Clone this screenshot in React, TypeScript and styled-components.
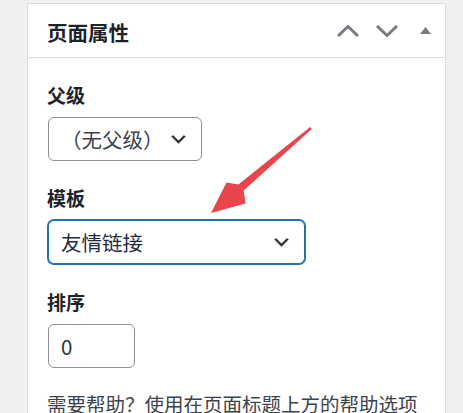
import React from 'react';
import styled, { createGlobalStyle } from 'styled-components';

const GlobalStyle = createGlobalStyle`
  html, body {
    margin: 0;
    padding: 0;
    background: #f0f0f1;
    overflow: hidden;
  }
  body {
    font-family: "Noto Sans CJK SC", "Noto Sans", sans-serif;
  }
`;

const Page = styled.div`
  position: relative;
  width: 463px;
  height: 413px;
  padding: 3px 0 0 27px;
  box-sizing: border-box;
  overflow: hidden;
`;

const Panel = styled.div`
  width: 419px;
  background: #fff;
  border: 1px solid #dcdcde;
  box-sizing: border-box;
`;

const Header = styled.div`
  display: flex;
  align-items: center;
  height: 54px;
  border-bottom: 1px solid #dcdcde;
  box-sizing: border-box;
  padding-left: 19px;
`;

const Title = styled.h2`
  flex: 1;
  margin: 4px 0 0;
  font-size: 20.5px;
  font-weight: 700;
  color: #1d2327;
  line-height: 1;
`;

const IconButton = styled.button`
  width: 39px;
  height: 40px;
  padding: 0;
  border: 0;
  background: none;
  display: flex;
  align-items: center;
  justify-content: center;
  color: #787c82;
`;

const Body = styled.div`
  padding: 0 19px 40px 20px;
`;

const Label = styled.div<{ $top?: number }>`
  margin-top: ${p => p.$top ?? 24}px;
  margin-bottom: 9px;
  margin-left: -1px;
  font-size: 19px;
  line-height: 26px;
  font-weight: 700;
  color: #1d2327;
`;

const SelectBox = styled.div<{ $width: number; $focused?: boolean }>`
  width: ${p => p.$width}px;
  height: 44px;
  box-sizing: border-box;
  display: flex;
  align-items: center;
  justify-content: space-between;
  padding: 0 12px 0 12px;
  border: 1px solid ${p => (p.$focused ? '#2271b1' : '#8c8f94')};
  box-shadow: ${p => (p.$focused ? '0 0 0 1px #2271b1' : 'none')};
  border-radius: 6px;
  font-size: 20.5px;
  color: ${p => (p.$focused ? '#1f2d3d' : '#3c434a')};
  background: #fff;
`;

const NumberInput = styled.div`
  width: 87px;
  height: 44px;
  box-sizing: border-box;
  display: flex;
  align-items: center;
  padding-left: 12px;
  border: 1px solid #8c8f94;
  border-radius: 6px;
  font-size: 20.5px;
  color: #2c3338;
`;

const Help = styled.p`
  margin: 22px 0 0 -1px;
  font-size: 19.5px;
  line-height: 28px;
  color: #3c434a;
`;

const Overlay = styled.svg`
  position: absolute;
  left: 0;
  top: 0;
  pointer-events: none;
`;

const Chevron = ({ up = false }: { up?: boolean }) => (
  <svg width="22" height="12" viewBox="0 0 22 12">
    <polyline
      points={up ? '1,11 11,1.5 21,11' : '1,1 11,10.5 21,1'}
      fill="none"
      stroke="currentColor"
      strokeWidth="3"
    />
  </svg>
);

const Triangle = () => (
  <svg width="11" height="7" viewBox="0 0 11 7">
    <polygon points="5.5,0 11,7 0,7" fill="currentColor" />
  </svg>
);

const SelectArrow = () => (
  <svg width="21" height="21" viewBox="0 0 20 20">
    <path d="M5 6l5 5 5-5 2 1-7 7-7-7 2-1z" fill="#2c3338" />
  </svg>
);

export default function App() {
  return (
    <>
      <GlobalStyle />
      <Page>
        <Panel>
          <Header>
            <Title>页面属性</Title>
            <IconButton><Chevron up /></IconButton>
            <IconButton><Chevron /></IconButton>
            <IconButton><Triangle /></IconButton>
          </Header>
          <Body>
            <Label>父级</Label>
            <SelectBox $width={154}>
              <span>（无父级）</span>
              <SelectArrow />
            </SelectBox>

            <Label>模板</Label>
            <SelectBox $width={257} $focused>
              <span>友情链接</span>
              <SelectArrow />
            </SelectBox>

            <Label $top={25}>排序</Label>
            <NumberInput>0</NumberInput>

            <Help>需要帮助？使用在页面标题上方的帮助选项卡。</Help>
          </Body>
        </Panel>
        <Overlay width="463" height="413" viewBox="0 0 463 413">
          <polygon
            points="310.2,127.0 238.3,184.4 226.5,182.5 211,213 245.5,203.5 243.7,190.6 311.8,129.0"
            fill="#e9454d"
          />
        </Overlay>
      </Page>
    </>
  );
}
